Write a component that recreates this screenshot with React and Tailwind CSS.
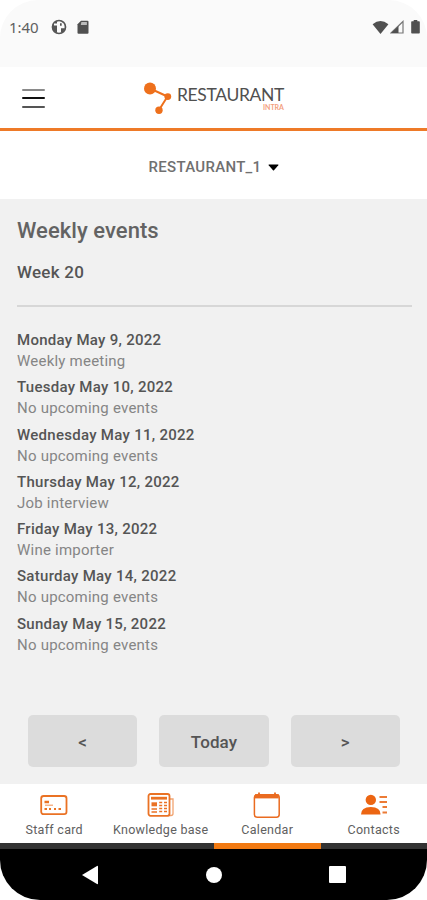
const events = [
  ["Monday May 9, 2022", "Weekly meeting"],
  ["Tuesday May 10, 2022", "No upcoming events"],
  ["Wednesday May 11, 2022", "No upcoming events"],
  ["Thursday May 12, 2022", "Job interview"],
  ["Friday May 13, 2022", "Wine importer"],
  ["Saturday May 14, 2022", "No upcoming events"],
  ["Sunday May 15, 2022", "No upcoming events"],
];

function StatusBar() {
  return (
    <div className="flex h-[67px] items-start justify-between rounded-t-[38px] bg-[#fafafa] pt-[17px] pr-[7px] pl-[9px] text-[#555]">
      <div className="flex h-5 items-center">
        <span className="w-[42px] pt-[1px] font-['Noto_Sans'] text-[15px] tracking-[-0.1px] text-[#606060]">1:40</span>
        <svg className="h-4 w-4" viewBox="0 0 16 16">
          <circle cx="8" cy="8" r="6.5" fill="none" stroke="#555" strokeWidth="1.7" />
          <path d="M1.5 8A6.5 6.5 0 0 1 6 2v11.5A6 6 0 0 1 1.5 8z" fill="#555" />
          <path d="M3 4.4h9.5v4H9.2v4.6H6.4V6.6H3z" fill="#fafafa" />
          <path d="M9 4.2h1.7v2.6H9zM10 9.2h4l-2 3.8h-2z" fill="#555" />
        </svg>
        <svg className="ml-[10px] h-4 w-3" viewBox="0 0 12 16">
          <path d="M4 1.8h6.5q1 0 1 1v10.9q0 1-1 1h-9q-1 0-1-1V5.3z" fill="#505050" />
          <path d="M4.4 3h5.5v3H3.8z" fill="#bbb" />
        </svg>
      </div>
      <div className="flex h-5 items-center">
        <svg className="h-4 w-[17px]" viewBox="0 0 17 16">
          <path d="M.6 5.2Q8.5-1.2 16.4 5.2L8.5 15z" fill="#505050" />
        </svg>
        <svg className="ml-[1px] h-4 w-[14px]" viewBox="0 0 14 16">
          <path d="M1 14 13 2.5V14z" fill="#fafafa" stroke="#777" strokeWidth="1.2" />
          <path d="M1 14 8.5 7v7z" fill="#505050" />
        </svg>
        <svg className="ml-[7px] h-4 w-[9px]" viewBox="0 0 9 16">
          <path d="M2.7 1h3.6v1.3H8q.8 0 .8.8v10.6q0 .8-.8.8H1q-.8 0-.8-.8V3.1q0-.8.8-.8h1.7z" fill="#505050" />
        </svg>
      </div>
    </div>
  );
}

function Header() {
  return (
    <header className="grid h-[64px] grid-cols-[143px_1fr] border-b-[3px] border-[#ee7a28] bg-white">
      <div className="flex flex-col gap-[6px] pt-[22px] pl-[22px]">
        <span className="h-[2px] w-[23px] rounded-full bg-[#8a8a8a]" />
        <span className="h-[2px] w-[23px] rounded-full bg-[#111]" />
        <span className="mt-[1px] h-[2px] w-[23px] rounded-full bg-[#555]" />
      </div>
      <div className="flex items-start pt-[14px]">
        <svg className="h-[34px] w-[30px]" viewBox="0 0 30 34">
          <path d="M7 7.5 24.5 15.5 16 29" fill="none" stroke="#ee701c" strokeWidth="2" />
          <circle cx="7" cy="7.5" r="6" fill="#ee701c" />
          <circle cx="24.8" cy="15.6" r="3.4" fill="#ee701c" />
          <circle cx="16" cy="29.3" r="3.7" fill="#ee701c" />
        </svg>
        <div className="flex w-[111px] flex-col pt-[5px] pl-[4px] font-['Lato']">
          <span className="text-[17.5px] leading-[17px] tracking-[-0.35px] whitespace-nowrap text-[#505050]">RESTAURANT</span>
          <span className="mt-[1px] self-end text-[7px] leading-[7px] font-bold text-[#f3a080]">INTRA</span>
        </div>
      </div>
    </header>
  );
}

const tabs = [
  {
    label: "Staff card",
    icon: (
      <svg className="h-7 w-7" viewBox="0 0 28 28" fill="none" stroke="#ea7224">
        <rect x="1.2" y="5" width="25.3" height="18.2" rx="2.4" strokeWidth="1.8" />
        <path d="M4.5 11h4.5" strokeWidth="2.5" />
        <path d="M5 14.2h8" strokeWidth="1.2" opacity=".65" />
        <path d="M4.5 18h2.5m2 0h2m3 0h2m2.5 0h2.5" strokeWidth="2" />
      </svg>
    ),
  },
  {
    label: "Knowledge base",
    icon: (
      <svg className="h-7 w-7" viewBox="0 0 28 28" fill="none" stroke="#ea7224">
        <path d="M22.5 8H26v14.5q0 2-2 2h-3" strokeWidth="1.3" opacity=".65" />
        <rect x="1.5" y="3" width="21" height="21.8" rx="2" strokeWidth="1.8" />
        <path d="M4 7.2h16" strokeWidth="2.8" />
        <path d="M4.5 13.3h5.5" strokeWidth="4" />
        <path d="M12.2 11.5h3m1.8 0h3m-7.8 3h3m1.8 0h3m-7.8 3h3m1.8 0h3m-7.8 3h3m1.8 0h3M4.5 18h5.5m-5.5 3h5.5" strokeWidth="1.4" />
      </svg>
    ),
  },
  {
    label: "Calendar",
    icon: (
      <svg className="h-7 w-7" viewBox="0 0 28 28" fill="none" stroke="#ea6b20">
        <rect x="1.4" y="3.8" width="24.8" height="22.4" rx="2.7" strokeWidth="1.5" />
        <path d="M2 5.3h23.7" strokeWidth="4.2" />
        <path d="M6 1.4v3m16-3v3" strokeWidth="1.8" />
      </svg>
    ),
  },
  {
    label: "Contacts",
    icon: (
      <svg className="h-7 w-7" viewBox="0 0 28 28" fill="#ec6512">
        <circle cx="10.8" cy="8.9" r="5.2" />
        <path d="M1 23.5q0-7.5 9.8-7.5t9.8 7.5z" />
        <path d="M19.5 6h7.5M19.5 11h7.5M22.5 16h4.5M22.5 21.5h4.5" stroke="#ec7b36" strokeWidth="1.8" />
      </svg>
    ),
  },
];

export default function App() {
  return (
    <div className="flex h-[900px] w-[427px] flex-col overflow-hidden bg-white font-['Roboto',sans-serif] text-[#555]">
      <StatusBar />
      <Header />
      <div className="flex h-[68px] items-center justify-center gap-[7px] pt-[4px] pl-[1px]">
        <span className="text-[15px] font-medium tracking-[0.3px] text-[#707070]">RESTAURANT_1</span>
        <svg className="h-[7px] w-[11px]" viewBox="0 0 11 7">
          <path d="M1 .5h9q.8 0 .3.7L6 6.3q-.5.5-1 0L.7 1.2Q.2.5 1 .5z" fill="#000" />
        </svg>
      </div>
      <main className="flex h-[585px] flex-col bg-[#f1f1f1] pr-[15px] pl-[17px]">
        <h1 className="pt-[18px] text-[22px] leading-[28px] font-medium tracking-[0.05px] whitespace-nowrap text-[#636363]">Weekly events</h1>
        <h2 className="pt-[16px] text-[17px] leading-[22px] font-medium tracking-[0.25px] text-[#555]">Week 20</h2>
        <hr className="mt-[22px] border-t-2 border-[#d7d7d7]" />
        <ul className="pt-[22px]">
          {events.map(([day, title]) => (
            <li key={day} className="h-[47.25px]">
              <p className="text-[15px] leading-[22px] font-medium tracking-[0.28px] text-[#555]">{day}</p>
              <p className="text-[15px] leading-[21px] tracking-[0.22px] text-[#858585]">{title}</p>
            </li>
          ))}
        </ul>
        <div className="mt-auto mr-[12px] mb-[17px] ml-[11px] grid grid-cols-3 gap-[22px]">
          {["<", "Today", ">"].map((label) => (
            <button key={label} className="h-[52px] rounded-[5px] bg-[#dcdcdc] pt-[3px] text-[17px] font-medium tracking-[0.1px] text-[#555]">{label}</button>
          ))}
        </div>
      </main>
      <nav className="grid h-[59px] grid-cols-4 bg-white pl-[1px]">
        {tabs.map(({ label, icon }) => (
          <div key={label} className="flex flex-col items-center pt-[7px]">
            {icon}
            <span className="mt-[3px] text-[12.5px] leading-[15px] tracking-[0.28px] whitespace-nowrap text-[#606060]">{label}</span>
          </div>
        ))}
      </nav>
      <div className="flex h-[6px] bg-[#333]">
        <span className="ml-[214px] h-full w-[107px] bg-[#f27a12]" />
      </div>
      <div className="grid h-[51px] grid-cols-[180px_68px_178px] items-center rounded-b-[40px] bg-black">
        <svg className="h-5 w-[18px] justify-self-center" viewBox="0 0 18 20">
          <path d="M1 10 16 1q1-.5 1 .6v16.8q0 1.1-1 .6z" fill="#fff" />
        </svg>
        <span className="h-[16px] w-[16px] justify-self-center rounded-full bg-white" />
        <span className="h-[17px] w-[17px] justify-self-center rounded-[1px] bg-white" />
      </div>
    </div>
  );
}
